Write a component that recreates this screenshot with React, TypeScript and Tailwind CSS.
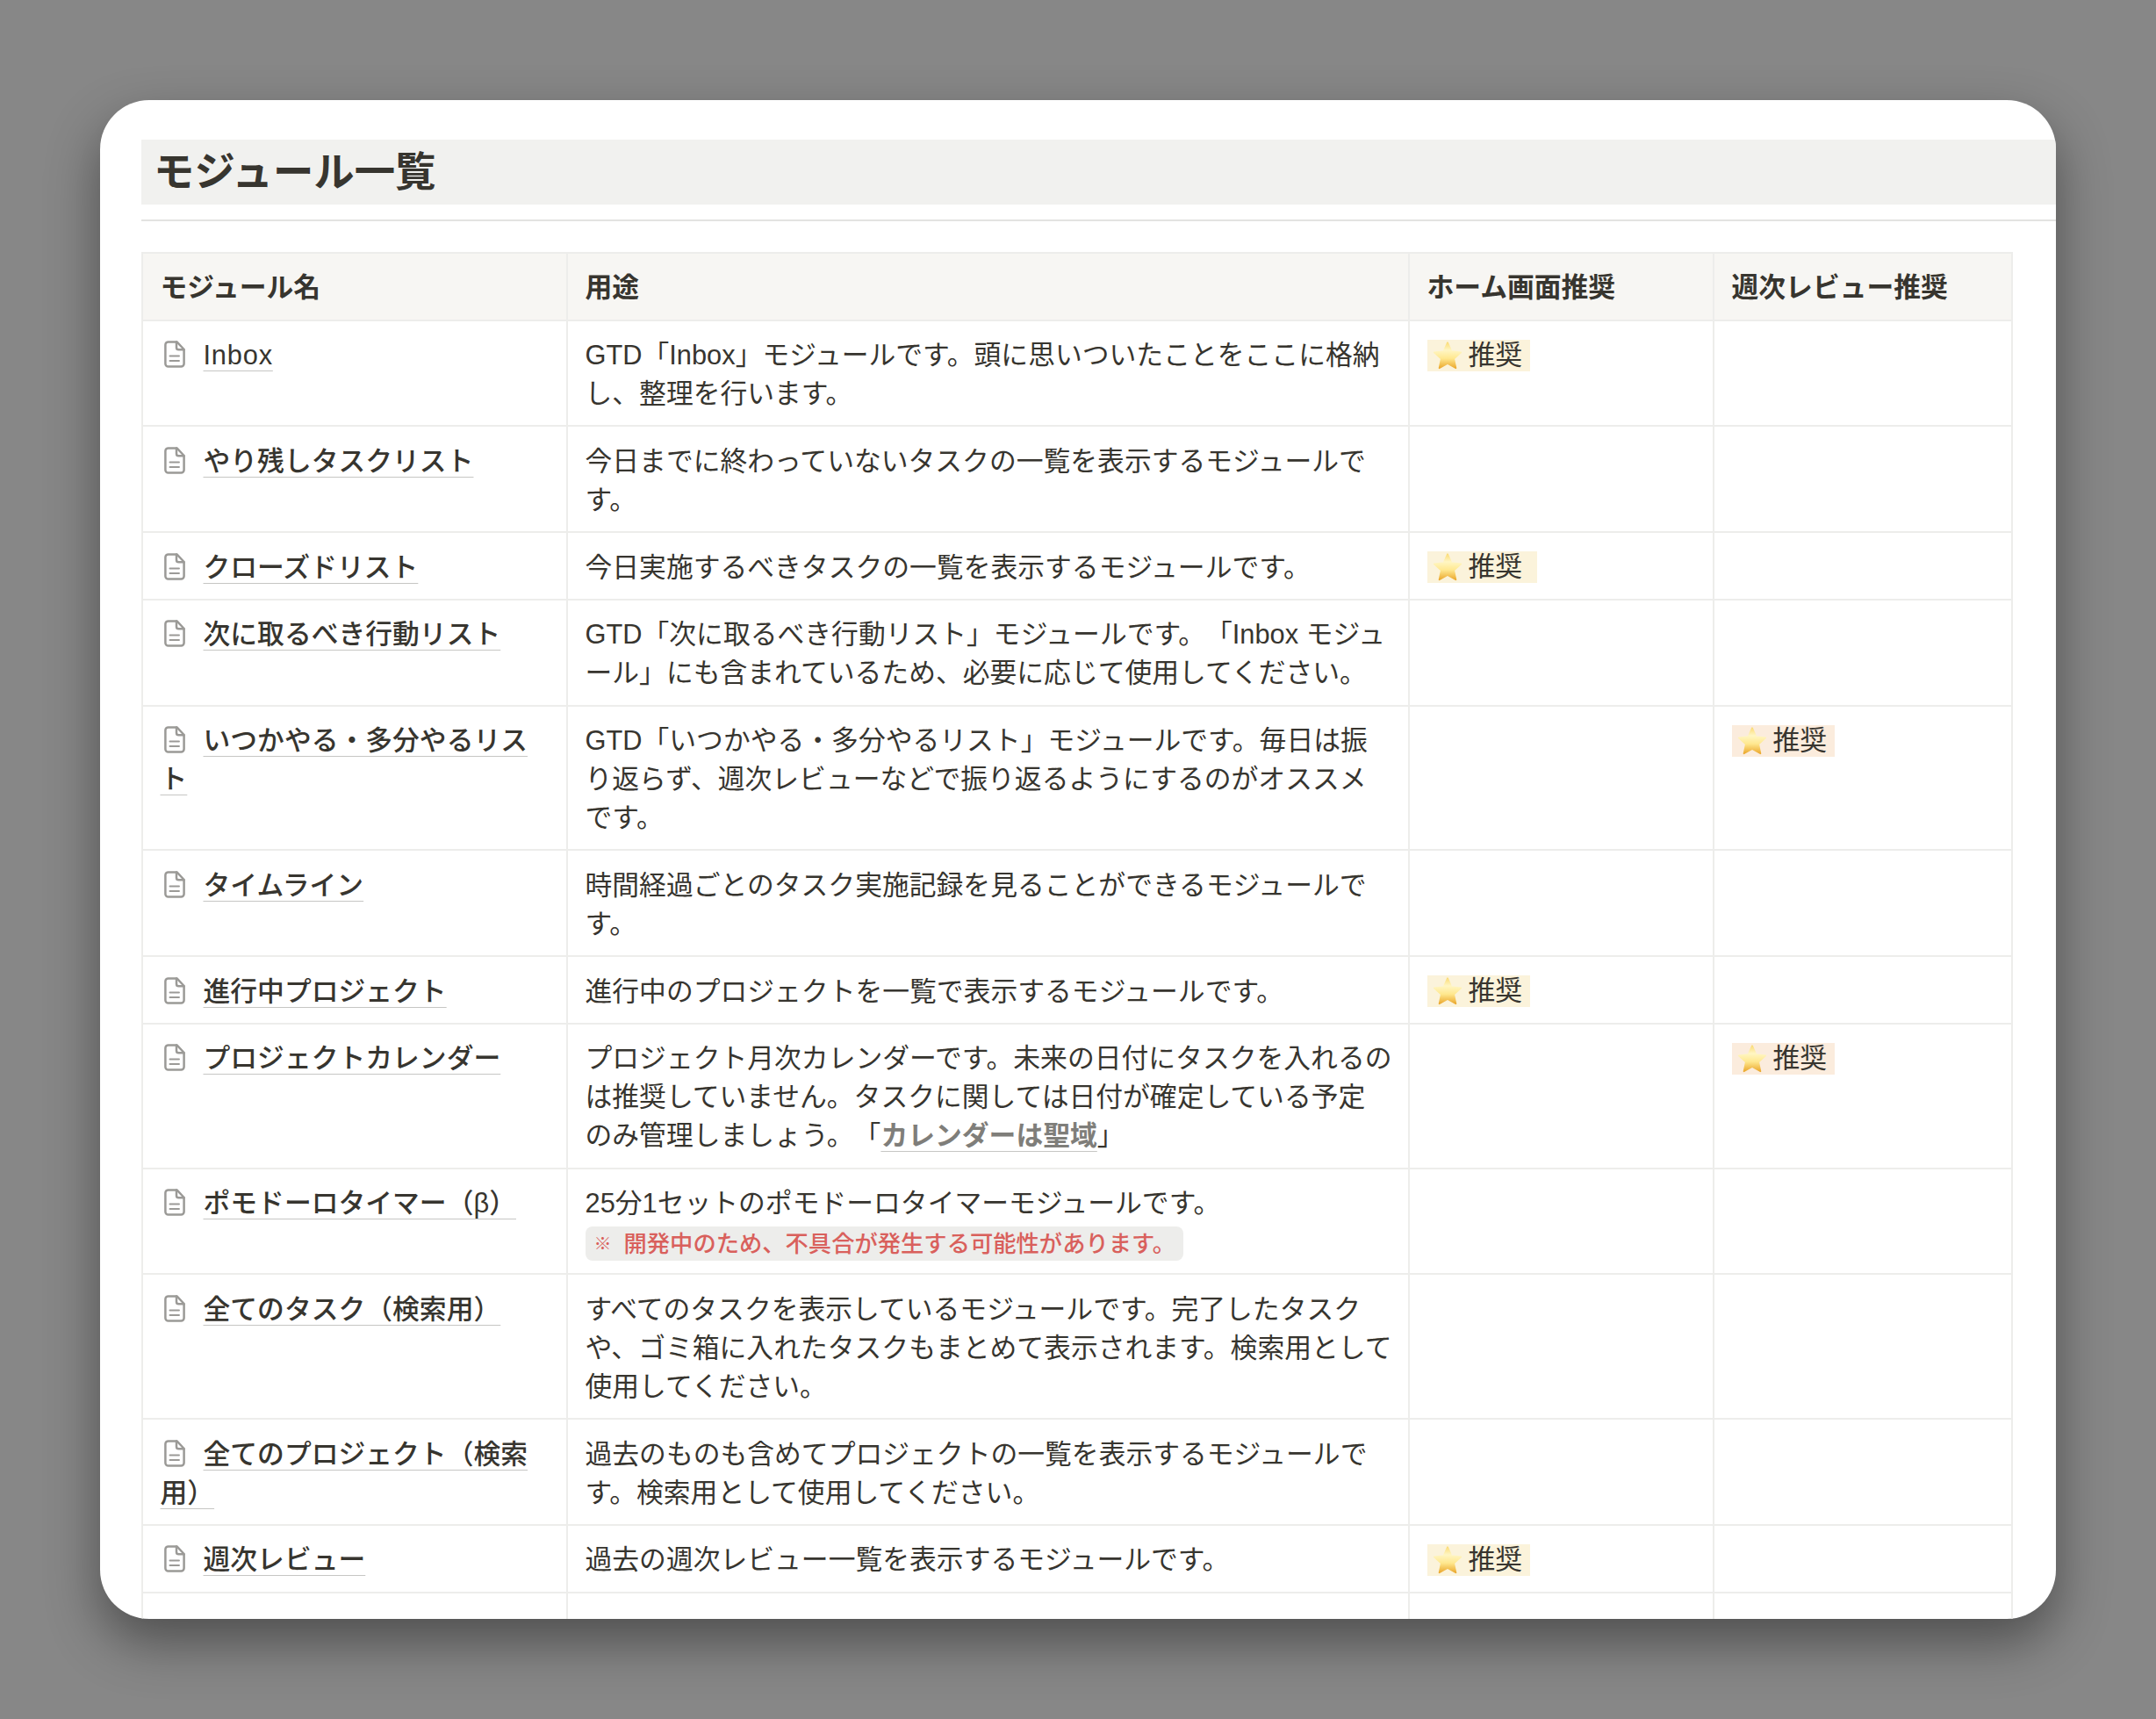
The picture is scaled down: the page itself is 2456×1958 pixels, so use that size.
const rows = [
  { name: ['Inbox'], use: ['GTD「Inbox」モジュールです。頭に思いついたことをここに格納', 'し、整理を行います。'], home: '推奨' },
  { name: ['やり残しタスクリスト'], use: ['今日までに終わっていないタスクの一覧を表示するモジュールで', 'す。'] },
  { name: ['クローズドリスト'], use: ['今日実施するべきタスクの一覧を表示するモジュールです。'], home: '推奨 ' },
  { name: ['次に取るべき行動リスト'], use: ['GTD「次に取るべき行動リスト」モジュールです。「Inbox モジュ', 'ール」にも含まれているため、必要に応じて使用してください。'] },
  { name: ['いつかやる・多分やるリス', 'ト'], use: ['GTD「いつかやる・多分やるリスト」モジュールです。毎日は振', 'り返らず、週次レビューなどで振り返るようにするのがオススメ', 'です。'], review: '推奨' },
  { name: ['タイムライン'], use: ['時間経過ごとのタスク実施記録を見ることができるモジュールで', 'す。'] },
  { name: ['進行中プロジェクト'], use: ['進行中のプロジェクトを一覧で表示するモジュールです。'], home: '推奨' },
  { name: ['プロジェクトカレンダー'], use: ['プロジェクト月次カレンダーです。未来の日付にタスクを入れるの', 'は推奨していません。タスクに関しては日付が確定している予定'], link: true, review: '推奨' },
  { name: ['ポモドーロタイマー（β）'], use: ['25分1セットのポモドーロタイマーモジュールです。'], warn: true },
  { name: ['全てのタスク（検索用）'], use: ['すべてのタスクを表示しているモジュールです。完了したタスク', 'や、ゴミ箱に入れたタスクもまとめて表示されます。検索用として', '使用してください。'] },
  { name: ['全てのプロジェクト（検索', '用）'], use: ['過去のものも含めてプロジェクトの一覧を表示するモジュールで', 'す。検索用として使用してください。'] },
  { name: ['週次レビュー'], use: ['過去の週次レビュー一覧を表示するモジュールです。'], home: '推奨' },
];

const linkLine = 'underline decoration-[#c6c6c4] decoration-[1px] underline-offset-[7px] [text-decoration-skip-ink:none]';

function PageIcon() {
  return (
    <svg viewBox="0 0 24 31" className="inline-block w-[24px] h-[31px] ml-[4px] mr-[21px] align-[-4px]" fill="none" stroke="#9b9a97" strokeWidth="2.5" strokeLinejoin="round" strokeLinecap="round">
      <path d="M5 1.4h9.5L22.6 10v16.3a3.3 3.3 0 0 1-3.3 3.3H4.7a3.3 3.3 0 0 1-3.3-3.3V4.7A3.3 3.3 0 0 1 5 1.4z" />
      <path d="M14 1.6v6.1a2.6 2.6 0 0 0 2.6 2.6h5.8" />
      <path d="M6.5 17.5h10.5M6.5 23h10.5" strokeWidth="1.9" />
    </svg>
  );
}

function Star() {
  return (
    <svg viewBox="0 0 34 34" className="w-[36px] h-[36px] ml-[5px] mr-[6px] shrink-0">
      <defs>
        <linearGradient id="star" x1="0" y1="0" x2="0" y2="1">
          <stop offset="0" stopColor="#fbdc78" />
          <stop offset="0.3" stopColor="#fff6c4" />
          <stop offset="0.62" stopColor="#ffe88f" />
          <stop offset="1" stopColor="#eba92f" />
        </linearGradient>
      </defs>
      <path d="M17 3l4.2 9.4 10.2 1.1-7.6 6.9 2.1 10.1L17 25.4 8.1 30.5l2.1-10.1-7.6-6.9 10.2-1.1z" fill="url(#star)" stroke="url(#star)" strokeWidth="1.6" strokeLinejoin="round" />
    </svg>
  );
}

function Badge({ label, color }: { label: string; color: string }) {
  return (
    <div className="flex items-center h-[44px] -mt-[0.5px]">
      <span className={`flex items-center h-[36px] ${color} ${label.endsWith(' ') ? 'w-[125px]' : 'w-[117px]'}`}>
        <Star />
        {label.trim()}
      </span>
    </div>
  );
}

const cell = 'border-2 border-[#ededeb] px-[19.5px] pt-[17.5px] pb-[13.25px] align-top whitespace-nowrap';
const head = 'border-2 border-[#ededeb] bg-[#f7f6f3] px-[19.5px] pt-[3px] text-left font-bold';

export default function App() {
  return (
    <div lang="ja" className="h-[1958px] overflow-hidden bg-[#878787] pt-[114px] pl-[114px] font-['Liberation_Sans','Noto_Sans_CJK_JP',sans-serif] text-[#37352f] [text-spacing-trim:space-all]">
      <div className="w-[2228px] h-[1730px] overflow-hidden rounded-[56px] bg-white pt-[45px] pl-[47px] shadow-[0_26px_60px_rgba(0,0,0,0.42)]">
        <h2 className="flex items-center h-[74px] pl-[14px] pt-[2px] bg-[#f1f1ef] text-[46.4px] font-bold">モジュール一覧</h2>
        <div className="h-[2px] mt-[17px] bg-[#e3e3e1]" />
        <table className="mt-[35px] w-[2130px] table-fixed border-collapse text-[30.8px] leading-[44px]">
          <colgroup>
            <col className="w-[484px]" />
            <col className="w-[959px]" />
            <col className="w-[347px]" />
            <col className="w-[340px]" />
          </colgroup>
          <thead>
            <tr className="h-[76.5px]">
              <th className={head}>モジュール名</th>
              <th className={head}>用途</th>
              <th className={head}>ホーム画面推奨</th>
              <th className={head}>週次レビュー推奨</th>
            </tr>
          </thead>
          <tbody>
            {rows.map((row) => (
              <tr key={row.name[0]}>
                <td className={cell}>
                  {row.name.map((line, i) => (
                    <div key={line} className="h-[44px]">
                      {i === 0 && <PageIcon />}
                      <span className={`${line === 'Inbox' ? 'tracking-[0.8px]' : 'font-medium'} ${linkLine}`}>{line}</span>
                    </div>
                  ))}
                </td>
                <td className={cell}>
                  {row.use.map((line) => (
                    <div key={line} className="h-[44px]">{line}</div>
                  ))}
                  {row.link && (
                    <div className="h-[44px]">
                      のみ管理しましょう。「
                      <span className={`font-bold text-[#7f7e7a] ${linkLine}`}>カレンダーは聖域</span>
                      」
                    </div>
                  )}
                  {row.warn && (
                    <div className="flex items-center h-[39px] w-[681px] mt-[4px] mb-[1px] pl-[10px] rounded-[8px] bg-[#ededeb] text-[26.3px] font-medium text-[#d9605c]">
                      <span className="mr-[14px] text-[20px] font-bold">※</span>
                      開発中のため、不具合が発生する可能性があります。
                    </div>
                  )}
                </td>
                <td className={cell}>{row.home && <Badge label={row.home} color="bg-[#fbf3db]" />}</td>
                <td className={cell}>{row.review && <Badge label={row.review} color="bg-[#fbecdd]" />}</td>
              </tr>
            ))}
            <tr className="h-[77px]">
              <td className={cell} />
              <td className={cell} />
              <td className={cell} />
              <td className={cell} />
            </tr>
          </tbody>
        </table>
      </div>
    </div>
  );
}
